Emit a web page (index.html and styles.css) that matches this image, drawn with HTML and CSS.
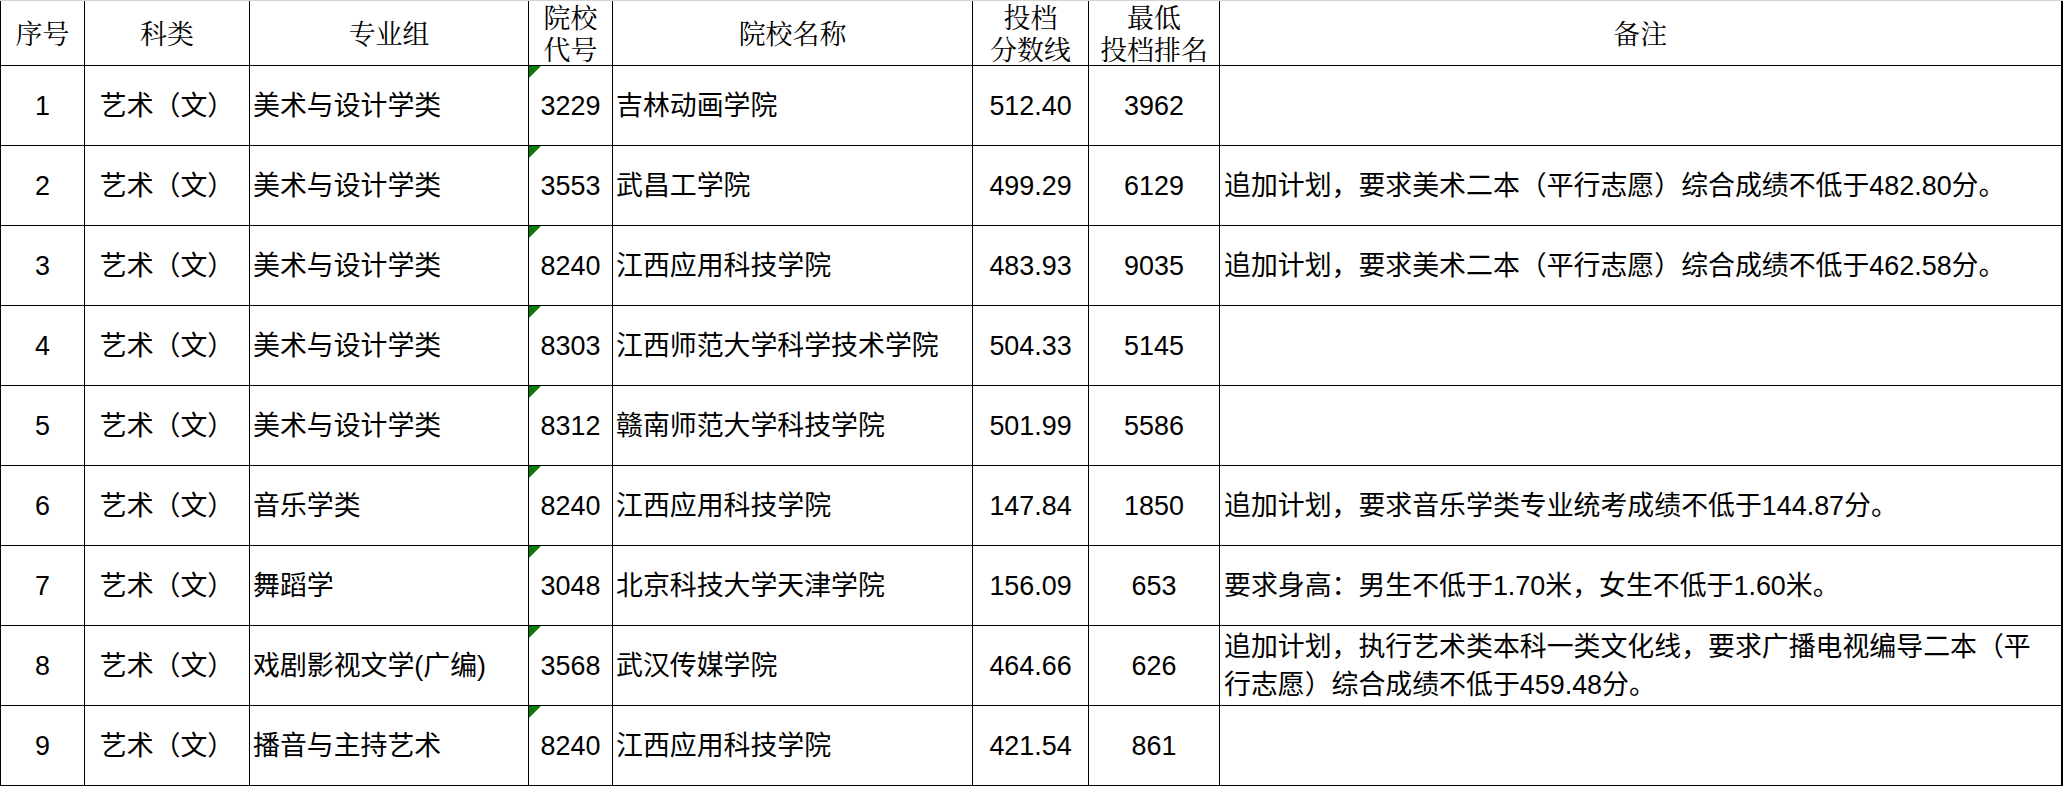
FILE: index.html
```html
<!DOCTYPE html>
<html lang="zh-CN">
<head>
<meta charset="utf-8">
<title>投档线</title>
<link rel="stylesheet" href="styles.css">
</head>
<body>
<div class="topline"></div>
<table class="sheet">
  <colgroup>
    <col class="c-no">
    <col class="c-type">
    <col class="c-group">
    <col class="c-code">
    <col class="c-name">
    <col class="c-score">
    <col class="c-rank">
    <col class="c-note">
  </colgroup>
  <thead>
    <tr>
      <th>序号</th>
      <th>科类</th>
      <th>专业组</th>
      <th class="two">院校<br>代号</th>
      <th>院校名称</th>
      <th class="two">投档<br>分数线</th>
      <th class="two">最低<br>投档排名</th>
      <th>备注</th>
    </tr>
  </thead>
  <tbody>
    <tr>
      <td class="ctr">1</td><td class="ctr">艺术（文）</td><td class="lft">美术与设计学类</td>
      <td class="ctr code">3229</td><td class="lft">吉林动画学院</td>
      <td class="ctr">512.40</td><td class="ctr">3962</td><td class="lft note"></td>
    </tr>
    <tr>
      <td class="ctr">2</td><td class="ctr">艺术（文）</td><td class="lft">美术与设计学类</td>
      <td class="ctr code">3553</td><td class="lft">武昌工学院</td>
      <td class="ctr">499.29</td><td class="ctr">6129</td><td class="lft note">追加计划，要求美术二本（平行志愿）综合成绩不低于482.80分。</td>
    </tr>
    <tr>
      <td class="ctr">3</td><td class="ctr">艺术（文）</td><td class="lft">美术与设计学类</td>
      <td class="ctr code">8240</td><td class="lft">江西应用科技学院</td>
      <td class="ctr">483.93</td><td class="ctr">9035</td><td class="lft note">追加计划，要求美术二本（平行志愿）综合成绩不低于462.58分。</td>
    </tr>
    <tr>
      <td class="ctr">4</td><td class="ctr">艺术（文）</td><td class="lft">美术与设计学类</td>
      <td class="ctr code">8303</td><td class="lft">江西师范大学科学技术学院</td>
      <td class="ctr">504.33</td><td class="ctr">5145</td><td class="lft note"></td>
    </tr>
    <tr>
      <td class="ctr">5</td><td class="ctr">艺术（文）</td><td class="lft">美术与设计学类</td>
      <td class="ctr code">8312</td><td class="lft">赣南师范大学科技学院</td>
      <td class="ctr">501.99</td><td class="ctr">5586</td><td class="lft note"></td>
    </tr>
    <tr>
      <td class="ctr">6</td><td class="ctr">艺术（文）</td><td class="lft">音乐学类</td>
      <td class="ctr code">8240</td><td class="lft">江西应用科技学院</td>
      <td class="ctr">147.84</td><td class="ctr">1850</td><td class="lft note">追加计划，要求音乐学类专业统考成绩不低于144.87分。</td>
    </tr>
    <tr>
      <td class="ctr">7</td><td class="ctr">艺术（文）</td><td class="lft">舞蹈学</td>
      <td class="ctr code">3048</td><td class="lft">北京科技大学天津学院</td>
      <td class="ctr">156.09</td><td class="ctr">653</td><td class="lft note">要求身高：男生不低于1.70米，女生不低于1.60米。</td>
    </tr>
    <tr>
      <td class="ctr">8</td><td class="ctr">艺术（文）</td><td class="lft">戏剧影视文学(广编)</td>
      <td class="ctr code">3568</td><td class="lft">武汉传媒学院</td>
      <td class="ctr">464.66</td><td class="ctr">626</td><td class="lft note">追加计划，执行艺术类本科一类文化线，要求广播电视编导二本（平<br>行志愿）综合成绩不低于459.48分。</td>
    </tr>
    <tr>
      <td class="ctr">9</td><td class="ctr">艺术（文）</td><td class="lft">播音与主持艺术</td>
      <td class="ctr code">8240</td><td class="lft">江西应用科技学院</td>
      <td class="ctr">421.54</td><td class="ctr">861</td><td class="lft note"></td>
    </tr>
  </tbody>
</table>
</body>
</html>
```
FILE: styles.css
```css
html, body {
  margin: 0;
  padding: 0;
  background: #ffffff;
}

body {
  width: 2063px;
  height: 787px;
  overflow: hidden;
  color: #000000;
  font-family: "Liberation Sans", "Noto Sans CJK SC", sans-serif;
}

.topline {
  height: 1px;
  background: #d4d4d4;
}

.sheet {
  border-collapse: collapse;
  table-layout: fixed;
  width: 2062px;
  font-size: 26.9px;
}

.c-no { width: 84px; }
.c-type { width: 165px; }
.c-group { width: 279px; }
.c-code { width: 84px; }
.c-name { width: 360px; }
.c-score { width: 116px; }
.c-rank { width: 131px; }
.c-note { width: 842px; }

.sheet th,
.sheet td {
  border: 1px solid #000000;
  padding: 0 3px;
  vertical-align: middle;
}

.sheet th {
  border-top: none;
  height: 64px;
  font-family: "Noto Serif CJK SC", "Noto Sans CJK SC", serif;
  font-weight: normal;
  text-align: center;
  line-height: 32px;
  padding: 0;
  white-space: nowrap;
}

.sheet td {
  height: 79px;
  line-height: 38px;
  white-space: nowrap;
  overflow: hidden;
}

.sheet td.note {
  padding-left: 4px;
  padding-right: 0;
}

.sheet tr > :first-child {
  border-left: 1px solid #000000;
}

.sheet tr > :last-child {
  border-right: 2px solid #000000;
}

.ctr { text-align: center; }
.lft { text-align: left; }

.code {
  position: relative;
}

.code::before {
  content: "";
  position: absolute;
  left: 0;
  top: 0;
  width: 0;
  height: 0;
  border-top: 12px solid #0b7a0b;
  border-right: 12px solid transparent;
}
```
